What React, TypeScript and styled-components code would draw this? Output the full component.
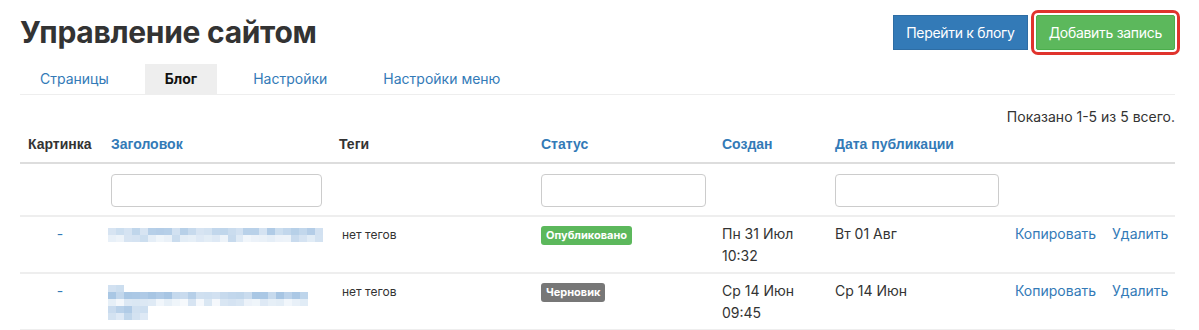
import { createGlobalStyle } from 'styled-components';
import styled from 'styled-components';

const GlobalStyle = createGlobalStyle`
  body {
    margin: 0;
    background: #fff;
    font-family: Inter, "Noto Sans", sans-serif;
    color: #333;
  }
`;

const Page = styled.div`
  padding: 14px 24px 0 20px;
`;

const TopBar = styled.div`
  display: flex;
  align-items: center;
  justify-content: space-between;
  height: 36px;
`;

const Title = styled.h1`
  margin: 0;
  font-size: 30px;
  font-weight: 700;
  letter-spacing: -0.3px;
  color: #333;
`;

const Actions = styled.div`
  display: flex;
  align-items: center;
  gap: 8px;
`;

const Button = styled.button<{ $variant: 'primary' | 'success'; $highlight?: boolean }>`
  height: 35px;
  padding: 0 12px;
  border: 1px solid ${p => (p.$variant === 'primary' ? '#2e6da4' : '#4cae4c')};
  background: ${p => (p.$variant === 'primary' ? '#337ab7' : '#5cb85c')};
  color: #fff;
  font-family: Inter, "Noto Sans", sans-serif;
  font-size: 14px;
  letter-spacing: -0.3px;
  border-radius: ${p => (p.$highlight ? '2px' : '0')};
  cursor: pointer;
  outline: ${p => (p.$highlight ? '3px solid #e0332d' : 'none')};
  outline-offset: 2px;
`;

const Tabs = styled.nav`
  display: flex;
  gap: 16px;
  margin-top: 14px;
  border-bottom: 1px solid #eee;
`;

const Tab = styled.a<{ $active?: boolean }>`
  height: 30px;
  line-height: 30px;
  padding: 0 20px;
  font-size: 14px;
  color: ${p => (p.$active ? '#111' : '#337ab7')};
  font-weight: ${p => (p.$active ? 700 : 400)};
  background: ${p => (p.$active ? '#eee' : 'transparent')};
  text-decoration: none;
`;

const Summary = styled.div`
  text-align: right;
  font-size: 14px;
  margin-top: 13px;
  color: #333;
`;

const Table = styled.table`
  width: 100%;
  border-collapse: collapse;
  table-layout: fixed;
`;

const Th = styled.th<{ $link?: boolean }>`
  text-align: left;
  padding: 8px;
  height: 21px;
  font-family: "Liberation Sans", Arial, sans-serif;
  font-size: 14px;
  font-weight: 700;
  color: ${p => (p.$link ? '#337ab7' : '#333')};
  border-bottom: 2px solid #ddd;
`;

const FilterCell = styled.td`
  padding: 10px 8px 8px;
  border-bottom: 2px solid #eee;
`;

const FilterInput = styled.input<{ $w: number }>`
  width: ${p => p.$w}px;
  height: 33px;
  box-sizing: border-box;
  border: 1px solid #ccc;
  border-radius: 4px;
  display: block;
`;

const Td = styled.td<{ $center?: boolean }>`
  padding: 6px 8px 5px;
  vertical-align: top;
  font-size: 14px;
  line-height: 22px;
  height: 44px;
  color: #333;
  text-align: ${p => (p.$center ? 'center' : 'left')};
  border-bottom: 2px solid #eee;
`;

const Dash = styled.span`
  color: #337ab7;
  margin-left: -3px;
`;

const Tags = styled.span`
  font-size: 12px;
  margin-left: 3px;
`;

const Badge = styled.span<{ $kind: 'published' | 'draft' }>`
  display: inline-block;
  padding: 0 5px;
  height: 19px;
  line-height: 19px;
  border-radius: 3px;
  font-size: 11px;
  font-weight: 700;
  color: #fff;
  background: ${p => (p.$kind === 'published' ? '#5cb85c' : '#777')};
`;

const LinkAction = styled.a`
  color: #337ab7;
  text-decoration: none;
  margin-right: 16px;
  &:last-child {
    margin-right: 0;
  }
`;

const Mosaic = styled.div`
  display: flex;
  flex-direction: column;
  margin-left: -3px;
  padding-top: 5px;
`;

const MosaicRow = styled.div`
  display: flex;
  height: 7px;
`;

const Cell = styled.span`
  width: 8px;
  height: 7px;
`;

function shade(seed: number, i: number, base: number) {
  const v = Math.abs(Math.sin(seed * 31.7 + i * 12.9898) * 43758.5453) % 1;
  const a = base + v * 0.25;
  return `rgba(80, 140, 200, ${a.toFixed(2)})`;
}

type BlurLine = { n: number; base: number };

const Blur = ({ lines, seed }: { lines: BlurLine[]; seed: number }) => (
  <Mosaic>
    {lines.map((l, r) => (
      <MosaicRow key={r}>
        {Array.from({ length: l.n }).map((_, i) => (
          <Cell key={i} style={{ background: shade(seed + r, i, l.base) }} />
        ))}
      </MosaicRow>
    ))}
  </Mosaic>
);

const rows = [
  {
    status: 'published' as const,
    label: 'Опубликовано',
    created: ['Пн 31 Июл', '10:32'],
    published: 'Вт 01 Авг',
    blur: [
      { n: 27, base: 0.2 },
      { n: 27, base: 0.08 },
    ],
  },
  {
    status: 'draft' as const,
    label: 'Черновик',
    created: ['Ср 14 Июн', '09:45'],
    published: 'Ср 14 Июн',
    blur: [
      { n: 2, base: 0.05 },
      { n: 25, base: 0.25 },
      { n: 25, base: 0.04 },
      { n: 5, base: 0.2 },
      { n: 5, base: 0.15 },
    ],
  },
];

export default function App() {
  return (
    <Page>
      <GlobalStyle />
      <TopBar>
        <Title>Управление сайтом</Title>
        <Actions>
          <Button $variant="primary">Перейти к блогу</Button>
          <Button $variant="success" $highlight>
            Добавить запись
          </Button>
        </Actions>
      </TopBar>
      <Tabs>
        <Tab>Страницы</Tab>
        <Tab $active>Блог</Tab>
        <Tab>Настройки</Tab>
        <Tab>Настройки меню</Tab>
      </Tabs>
      <Summary>Показано 1-5 из 5 всего.</Summary>
      <Table>
        <colgroup>
          <col style={{ width: 83 }} />
          <col style={{ width: 228 }} />
          <col style={{ width: 202 }} />
          <col style={{ width: 181 }} />
          <col style={{ width: 113 }} />
          <col style={{ width: 180 }} />
          <col style={{ width: 168 }} />
        </colgroup>
        <thead>
          <tr>
            <Th>Картинка</Th>
            <Th $link>Заголовок</Th>
            <Th>Теги</Th>
            <Th $link>Статус</Th>
            <Th $link>Создан</Th>
            <Th $link>Дата публикации</Th>
            <Th />
          </tr>
        </thead>
        <tbody>
          <tr>
            <FilterCell />
            <FilterCell>
              <FilterInput $w={211} />
            </FilterCell>
            <FilterCell />
            <FilterCell>
              <FilterInput $w={165} />
            </FilterCell>
            <FilterCell />
            <FilterCell>
              <FilterInput $w={164} />
            </FilterCell>
            <FilterCell />
          </tr>
          {rows.map((r, i) => (
            <tr key={i}>
              <Td $center>
                <Dash>-</Dash>
              </Td>
              <Td>
                <Blur lines={r.blur} seed={i * 7 + 1} />
              </Td>
              <Td>
                <Tags>нет тегов</Tags>
              </Td>
              <Td>
                <Badge $kind={r.status}>{r.label}</Badge>
              </Td>
              <Td>
                {r.created[0]}
                <br />
                {r.created[1]}
              </Td>
              <Td>{r.published}</Td>
              <Td>
                <LinkAction>Копировать</LinkAction>
                <LinkAction>Удалить</LinkAction>
              </Td>
            </tr>
          ))}
        </tbody>
      </Table>
    </Page>
  );
}
